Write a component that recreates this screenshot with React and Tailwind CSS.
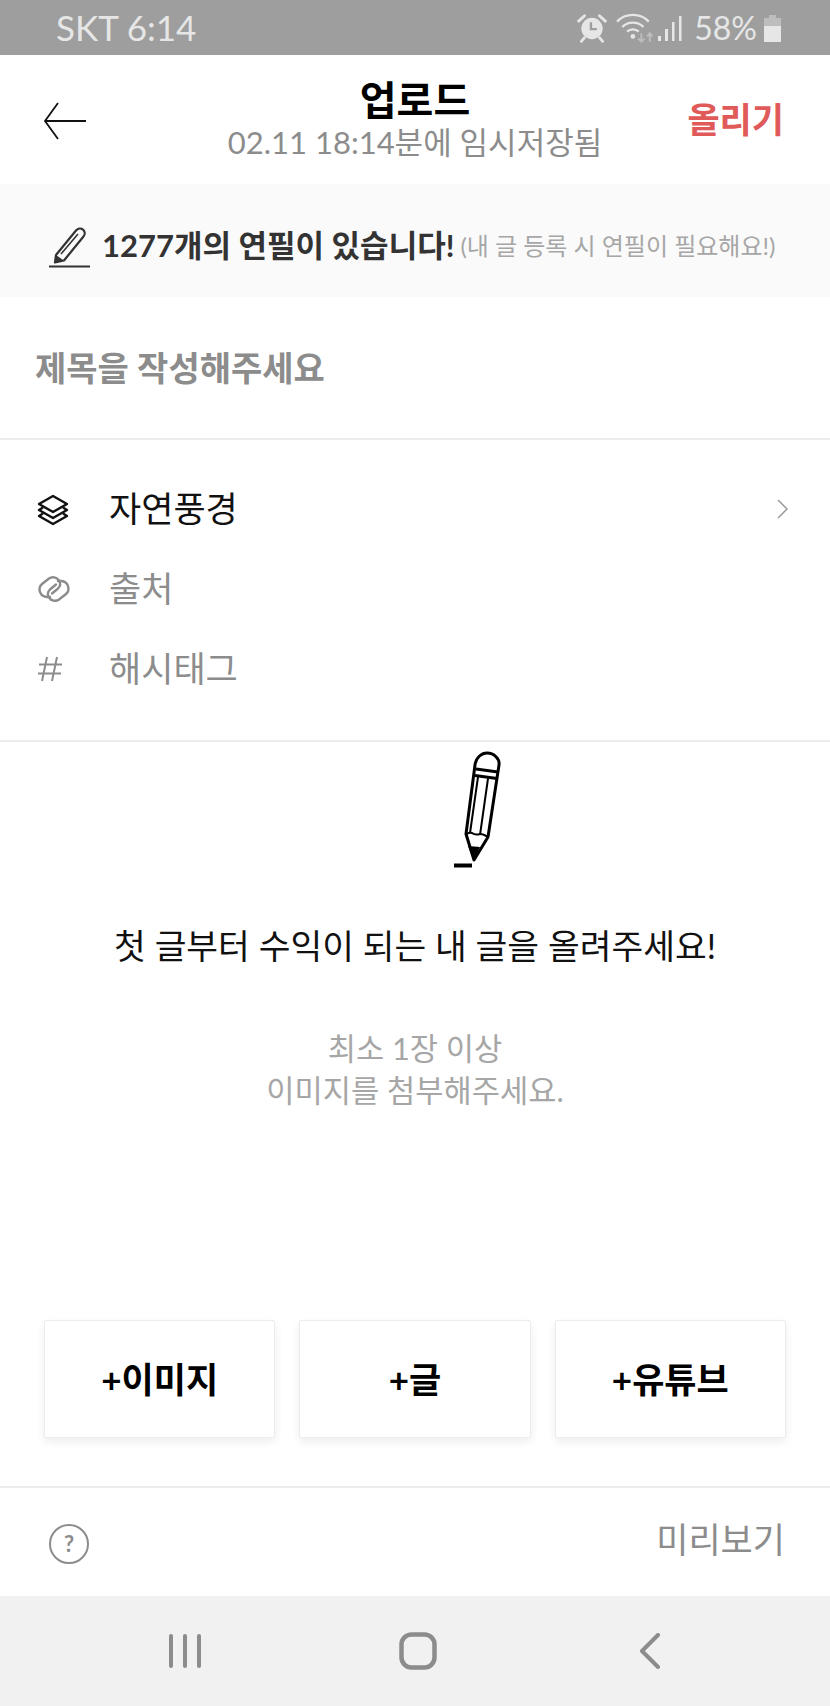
import React from "react";

const FONT = "font-['Lato','Noto_Sans_CJK_KR',sans-serif]";

function Alarm() {
  return (
    <svg width="32" height="32" viewBox="0 0 30 30" fill="none">
      <circle cx="15" cy="15.500" r="10" fill="#e6e6e6" />
      <path d="M14 9.500v6.500h5.500" stroke="#9e9e9e" strokeWidth="2.200" />
      <path d="M2.500 8.500 8 3.500M27.500 8.500 22 3.500" stroke="#e6e6e6" strokeWidth="2.800" strokeLinecap="round" />
      <path d="M8 24l-3 3.500M22 24l3 3.500" stroke="#e6e6e6" strokeWidth="2.600" strokeLinecap="round" />
    </svg>
  );
}

function Wifi() {
  return (
    <svg width="38" height="32" viewBox="0 0 36 30" fill="none">
      <path d="M1 9C9 .5 23 .5 31 9" stroke="#e6e6e6" strokeWidth="2.200" />
      <path d="M6 14C11 8.500 21 8.500 26 14" stroke="#e6e6e6" strokeWidth="2.200" />
      <path d="M10.500 18.500C13.500 15.500 18.500 15.500 21.500 18.500" stroke="#e6e6e6" strokeWidth="2.200" />
      <circle cx="16" cy="23" r="2.200" fill="#e6e6e6" />
      <path d="M24 20v8M21 25l3 3 3-3" stroke="#bdbdbd" strokeWidth="1.800" />
      <path d="M32 28v-8M29.500 23l2.500-3 2.500 3" stroke="#bdbdbd" strokeWidth="1.800" />
    </svg>
  );
}

function Signal() {
  return (
    <svg width="26" height="30" viewBox="0 0 26 30" fill="#e6e6e6">
      <rect x="1" y="23" width="3" height="5" />
      <rect x="8" y="16" width="3" height="12" />
      <rect x="15" y="9" width="2.500" height="19" />
      <rect x="22" y="3" width="2.500" height="25" />
    </svg>
  );
}

function Battery() {
  return (
    <svg width="20" height="30" viewBox="0 0 20 30">
      <path d="M6 2h7v3h5v24H1V5h5z" fill="#bdbdbd" />
      <path d="M1 13h17v16H1z" fill="#e6e6e6" />
    </svg>
  );
}

function NoticePencil() {
  return (
    <svg width="44" height="44" viewBox="0 0 44 44" fill="none" stroke="#333">
      <path d="M9 31 29 6.500c2-2.300 5-2.500 7-.8 2 1.700 2.300 4.600.5 6.800L17 36.500 8 38.500z" strokeWidth="2.200" strokeLinejoin="round" />
      <path d="M14 30 31 10" strokeWidth="1.600" />
      <path d="M8 39l1-8 7 5z" fill="#333" stroke="none" />
      <path d="M2 42.500h41" strokeWidth="1.800" />
    </svg>
  );
}

function Layers() {
  return (
    <svg width="32" height="32" viewBox="0 0 32 32" fill="none" stroke="#111" strokeWidth="2.400" strokeLinejoin="round" className="mt-[2px]">
      <path d="M16 2 30 10 16 18 2 10z" />
      <path d="M6 13.500 2 16 16 24 30 16 26 13.500" />
      <path d="M6 19.500 2 22 16 30 30 22 26 19.500" />
    </svg>
  );
}

function Clip() {
  return (
    <svg width="36" height="28" viewBox="0 0 36 28" fill="none" stroke="#8c8c8c" strokeWidth="2.400" strokeLinecap="round" className="ml-[-1px]">
      <path d="M22 6h3.500a7.500 7.500 0 0 1 4.500 13l-7 5.500a7 7 0 0 1-10-2c-2-3-1-6 1-8l6-5" />
      <path d="M14 22h-3.500a7.500 7.500 0 0 1-4.500-13l7-5.500a7 7 0 0 1 10 2c2 3 1 6-1 8l-6 5" />
    </svg>
  );
}

function Hash() {
  return (
    <svg width="26" height="28" viewBox="0 0 26 28" fill="none" stroke="#8c8c8c" strokeWidth="2">
      <path d="M10 2 5 26M20 2 15 26M2 9.500h23M1 18.500h23" />
    </svg>
  );
}

function BigPencil() {
  return (
    <svg width="50" height="120" viewBox="0 0 50 120" fill="none" stroke="#000">
      <path d="M21 14C22 6 28 2 33 2C40 2 46 8 45 14L34 86 20 109 12 83z" strokeWidth="3" strokeLinejoin="round" />
      <path d="M22 18 44 21M21 24.500 43 27.500" strokeWidth="3" />
      <path d="M24 26 16 82M34 27.500 26 84" strokeWidth="2" />
      <path d="M12.500 83c2.500-1.500 3.500-2 5.500-1 2.500 2 5 2 8 1 3-.5 5 1 8 3" strokeWidth="2" />
      <path d="M14 95 26 96 20 110z" fill="#000" stroke="none" />
      <path d="M0 114.500h18" strokeWidth="4" />
    </svg>
  );
}

function Chevron() {
  return (
    <svg width="14" height="22" viewBox="0 0 14 22" fill="none" stroke="#9a9a9a" strokeWidth="1.500">
      <path d="M2 2l9 9-9 9" />
    </svg>
  );
}

function Row({ icon, label, dark, right }) {
  return (
    <div className="flex h-[80px] items-center">
      <div className="flex w-[109px] shrink-0 pl-[37px]">{icon}</div>
      <span className={`text-[35px] leading-none font-normal ${dark ? "text-[#111]" : "text-[#8c8c8c]"}`}>{label}</span>
      {right && <div className="ml-auto pr-[40px]">{right}</div>}
    </div>
  );
}

function AddButton({ label }) {
  return (
    <button className="flex h-[118px] flex-1 items-center justify-center rounded-[2px] border border-[#ececec] bg-white text-[35px] font-bold text-black shadow-[0_4px_10px_rgba(0,0,0,0.07)]">
      {label}
    </button>
  );
}

export default function App() {
  return (
    <div className={`${FONT} flex h-[1706px] w-[830px] flex-col overflow-hidden bg-white`}>
      <div className="flex h-[55px] shrink-0 items-center justify-between bg-[#9e9e9e] pr-[47px] pl-[56px] text-[#e6e6e6]">
        <span className="text-[35px] leading-none">SKT 6:14</span>
        <div className="flex items-center text-[32px]">
          <Alarm />
          <div className="ml-[8px]"><Wifi /></div>
          <div className="ml-[3px]"><Signal /></div>
          <span className="ml-[11px] leading-none">58%</span>
          <div className="ml-[6px]"><Battery /></div>
        </div>
      </div>

      <div className="relative flex h-[129px] shrink-0 flex-col items-center pt-[22px]">
        <div className="absolute top-[46px] left-[42px]">
          <svg width="46" height="40" viewBox="0 0 46 40" fill="none" stroke="#111" strokeWidth="1.800">
            <path d="M44 20H3M16 2 3 20l13 18" />
          </svg>
        </div>
        <div className="text-[40px] leading-[46px] font-bold text-black">업로드</div>
        <div className="mt-[2px] text-[31px] leading-[34px] text-[#8c8c8c]">02.11 18:14분에 임시저장됨</div>
        <div className="absolute top-[41px] right-[46px] text-[35px] leading-[46px] font-bold text-[#e05a5a]">올리기</div>
      </div>

      <div className="flex h-[113px] shrink-0 items-center bg-[#fafafa] pt-[10px] pl-[47px]">
        <NoticePencil />
        <span className="ml-[11px] text-[31px] font-bold text-[#333]">1277개의 연필이 있습니다!</span>
        <span className="ml-[6px] text-[24px] text-[#a6a6a6]">(내 글 등록 시 연필이 필요해요!)</span>
      </div>

      <div className="flex h-[143px] shrink-0 items-center border-b-2 border-[#ececec] pl-[35px]">
        <span className="text-[34px] font-bold text-[#8c8c8c]">제목을 작성해주세요</span>
      </div>

      <div className="flex h-[302px] shrink-0 flex-col justify-center border-b-2 border-[#ececec] pb-[3px]">
        <Row icon={<Layers />} label="자연풍경" dark right={<Chevron />} />
        <Row icon={<Clip />} label="출처" />
        <Row icon={<Hash />} label="해시태그" />
      </div>

      <div className="flex flex-1 flex-col items-center">
        <div className="mt-[9px] pl-[128px]"><BigPencil /></div>
        <div className="mt-[53px] text-[34.5px] leading-[44px] text-[#111]">첫 글부터 수익이 되는 내 글을 올려주세요!</div>
        <div className="mt-[60px] text-center text-[30.7px] leading-[42px] text-[#a6a6a6]">
          <div>최소 1장 이상</div>
          <div>이미지를 첨부해주세요.</div>
        </div>
      </div>

      <div className="flex shrink-0 gap-[24px] px-[44px] pb-[48px]">
        <AddButton label="+이미지" />
        <AddButton label="+글" />
        <AddButton label="+유튜브" />
      </div>

      <div className="flex h-[110px] shrink-0 items-start justify-between border-t-2 border-[#ececec] pr-[45px] pl-[49px]">
        <div className="mt-[36px] flex h-[40px] w-[40px] items-center justify-center rounded-full border-2 border-[#8c8c8c] text-[22px] leading-none font-bold text-[#8c8c8c]">?</div>
        <span className="mt-[26px] text-[35px] leading-[50px] text-[#8c8c8c]">미리보기</span>
      </div>

      <div className="flex h-[110px] shrink-0 items-center bg-[#f1f1f1]">
        <div className="flex w-[399px] justify-start pl-[167px]">
          <svg width="36" height="36" viewBox="0 0 36 36" fill="#8c8c8c">
            <rect x="2" y="1" width="4" height="34" rx="2" />
            <rect x="16" y="1" width="4" height="34" rx="2" />
            <rect x="30" y="1" width="4" height="34" rx="2" />
          </svg>
        </div>
        <svg width="38" height="38" viewBox="0 0 38 38" fill="none" stroke="#8c8c8c" strokeWidth="4.500">
          <rect x="2.500" y="2.500" width="33" height="33" rx="10" />
        </svg>
        <div className="ml-[201px]">
          <svg width="24" height="36" viewBox="0 0 24 36" fill="none" stroke="#8c8c8c" strokeWidth="4" strokeLinecap="round" strokeLinejoin="round">
            <path d="M20 2 4 18l16 16" />
          </svg>
        </div>
      </div>
    </div>
  );
}
